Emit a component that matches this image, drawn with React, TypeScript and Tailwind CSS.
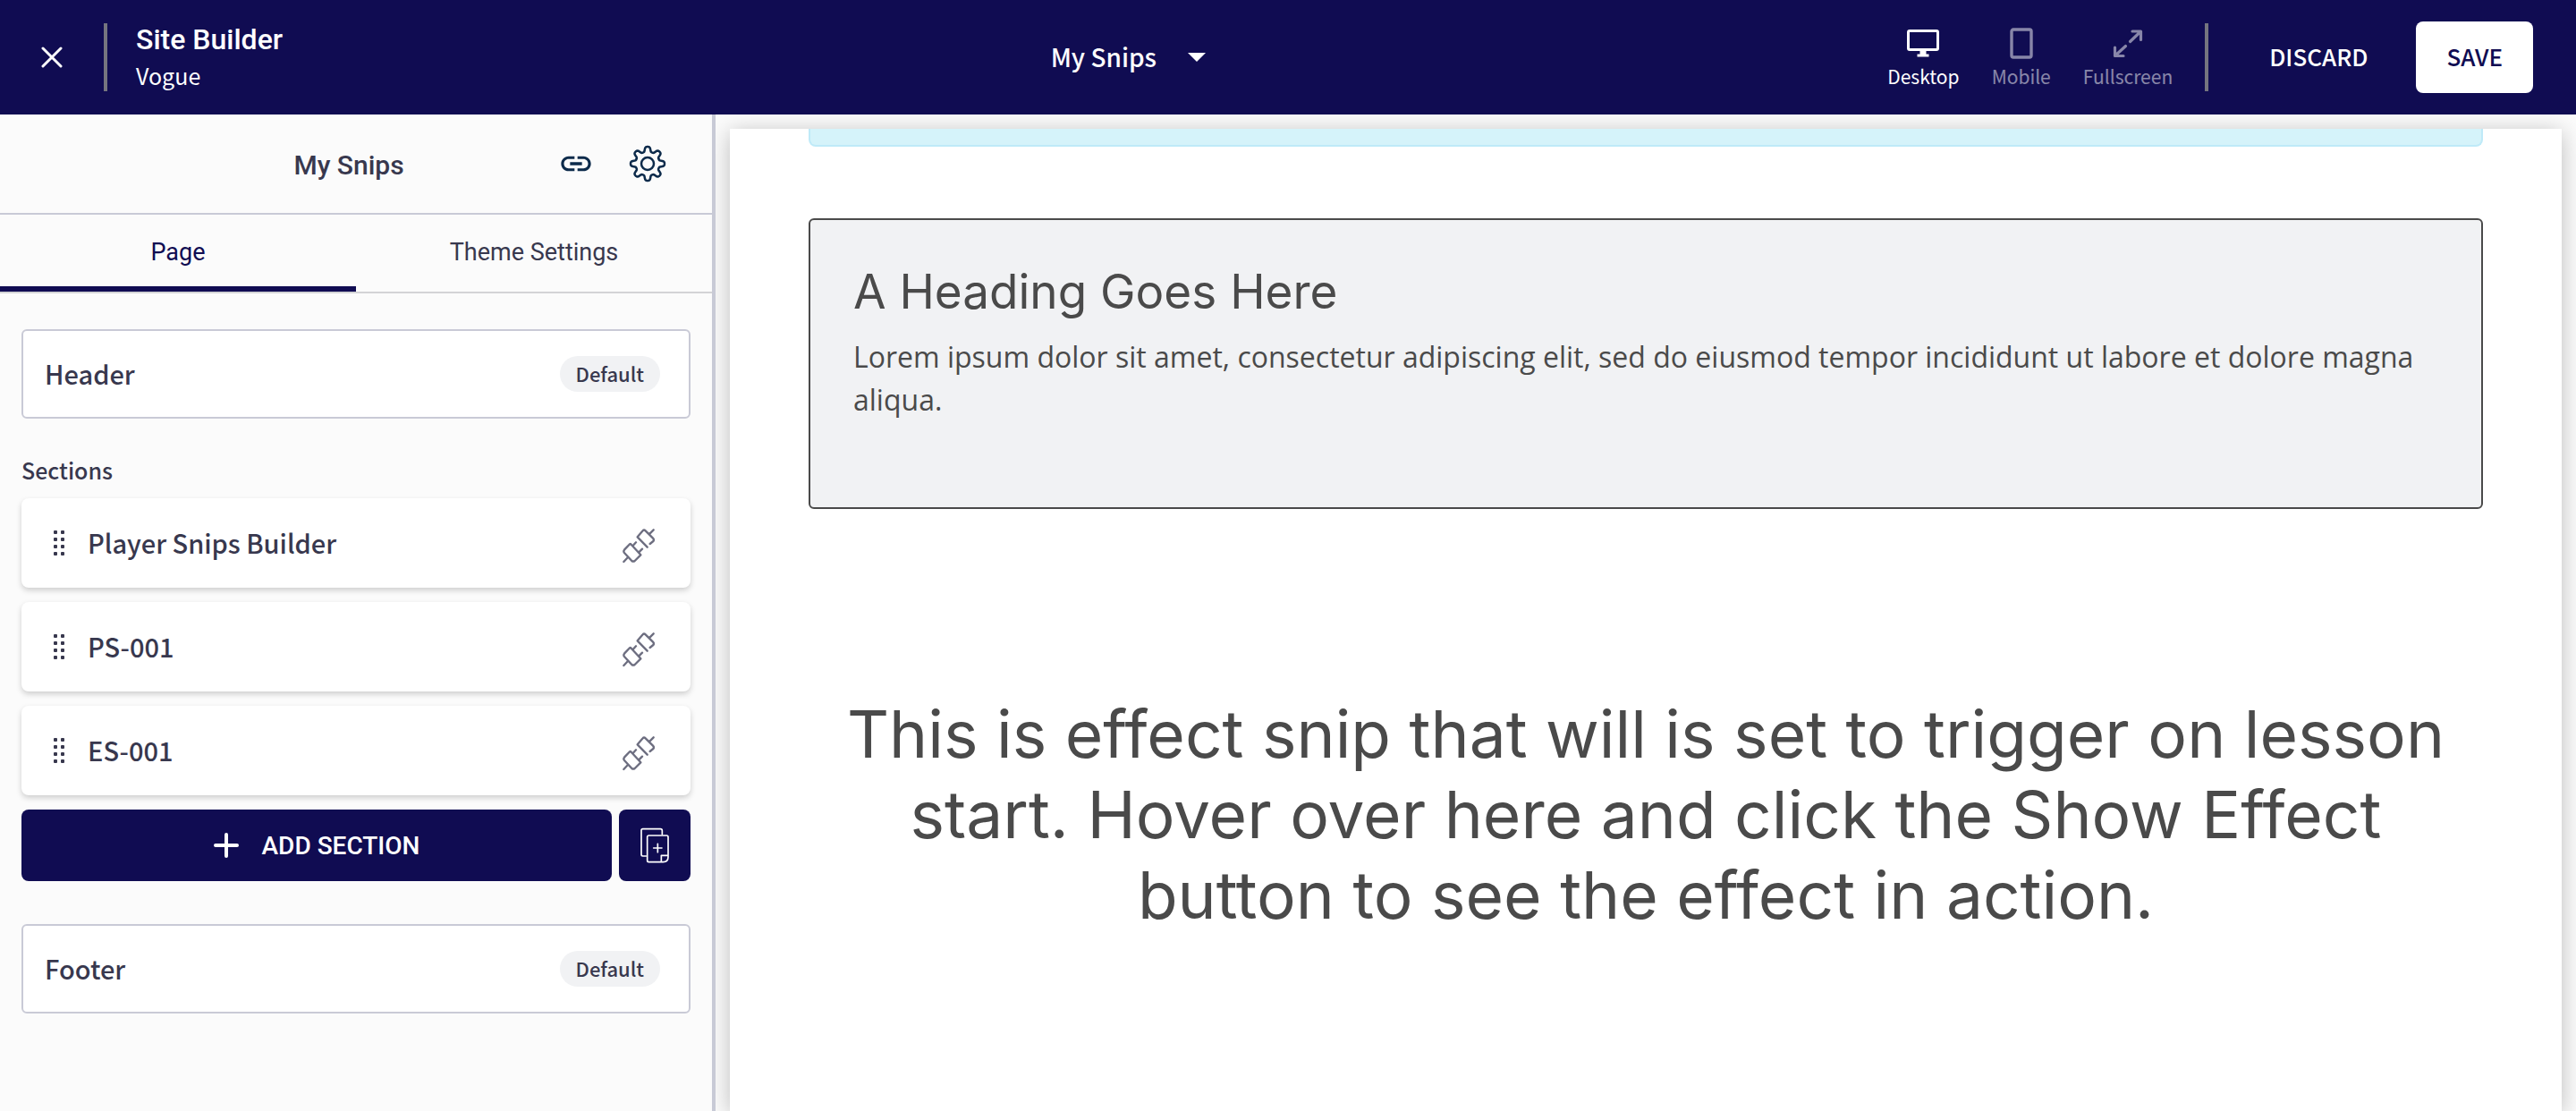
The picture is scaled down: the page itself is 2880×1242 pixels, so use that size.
import type { ReactNode } from 'react';
import { MdLink } from 'react-icons/md';

function CloseIcon() {
  return (
    <svg className="size-6" viewBox="0 0 24 24" fill="none" stroke="currentColor" strokeWidth="3" strokeLinecap="round" aria-hidden="true">
      <path d="M2 2 22 22M22 2 2 22" />
    </svg>
  );
}

function DesktopIcon() {
  return (
    <svg className="size-9" viewBox="0 0 36 36" fill="none" stroke="currentColor" aria-hidden="true">
      <rect x="1.5" y="3.5" width="33" height="21" rx="1.5" strokeWidth="3" />
      <path d="M18 25v6" strokeWidth="7" />
      <path d="M11.5 31h13" strokeWidth="3" />
    </svg>
  );
}

function MobileIcon() {
  return (
    <svg className="size-9" viewBox="0 0 36 36" fill="none" stroke="currentColor" strokeWidth="3.4" aria-hidden="true">
      <rect x="7" y="2" width="22" height="31" rx="2" />
    </svg>
  );
}

function FullscreenIcon() {
  return (
    <svg className="size-9" viewBox="0 0 36 36" fill="none" stroke="currentColor" strokeWidth="3.2" strokeLinecap="round" strokeLinejoin="round" aria-hidden="true">
      <path d="M23 4h9.500v9.500M32 4.500 20.500 15.500" />
      <path d="M13 31.500H3.500V22M4 31 15.500 20.500" />
    </svg>
  );
}

function gearOutline() {
  const points: string[] = [];
  for (let i = 0; i < 240; i++) {
    const a = (i / 240) * Math.PI * 2;
    const r = 16.2 + 2.9 * Math.tanh(1.8 * Math.cos(8 * a));
    points.push(`${(21 + r * Math.cos(a)).toFixed(2)} ${(21 + r * Math.sin(a)).toFixed(2)}`);
  }
  return `M${points.join('L')}Z`;
}

function GearIcon() {
  return (
    <svg className="size-[42px]" viewBox="0 0 42 42" fill="none" stroke="currentColor" strokeWidth="2.5" strokeLinejoin="round" aria-hidden="true">
      <path d={gearOutline()} />
      <circle cx="21" cy="21" r="7" />
    </svg>
  );
}

function DragIcon() {
  return (
    <svg className="h-7 w-3 shrink-0" viewBox="0 0 12 28" fill="currentColor" aria-hidden="true">
      {[0, 8, 16, 24].map((y) => (
        <g key={y}>
          <rect x="0" y={y} width="4" height="4" rx="1" />
          <rect x="8" y={y} width="4" height="4" rx="1" />
        </g>
      ))}
    </svg>
  );
}

function PlugIcon() {
  return (
    <svg className="h-10 w-9" viewBox="108 90 108 120" fill="none" stroke="currentColor" strokeWidth="7" strokeLinecap="round" strokeLinejoin="round" aria-hidden="true">
      <path d="M135 144 169 181 149 201q-5 4-10 0L114 174q-4-5 0-10L130 147q2-3 5-3Z" />
      <path d="M112 204 126 189M143 150 153 139M163 172 174 161" />
      <path d="M191 155 158 121 176 100q4-5 9 0L210 125q5 5 1 10L200 144M197 112 212 97" />
    </svg>
  );
}

function CopyPlusIcon() {
  return (
    <svg className="h-10 w-8" viewBox="168 133 96 120" fill="none" stroke="currentColor" strokeWidth="5" strokeLinecap="round" strokeLinejoin="round" aria-hidden="true">
      <path d="M187 229H176q-5 0-5-5V143q0-5 5-5H235q6 0 6 6V156" />
      <path d="M238 249H196q-5 0-5-5V165q0-5 5-5H256q5 0 5 5V232q0 17-17 17H238V227H260" />
      <path d="M226 188V216M212 202H240" />
    </svg>
  );
}

function ViewButton({ label, icon, active = false }: { label: string; icon: ReactNode; active?: boolean }) {
  return (
    <button type="button" aria-pressed={active} className={`flex flex-col items-center gap-0.5 pt-1 text-[21px] leading-8 ${active ? '' : 'opacity-50'}`}>
      {icon}
      {label}
    </button>
  );
}

function FixedCard({ title }: { title: string }) {
  return (
    <div className="flex h-[100px] items-center justify-between rounded-md border-2 border-[#c9cad6] bg-white pr-8 pl-6">
      <span className="pb-0.5 text-[29px] leading-10 font-medium">{title}</span>
      <span className="flex h-10 items-center rounded-full bg-[#f1f2f4] px-[18px] pb-0.5 text-[22px] leading-8 font-medium">Default</span>
    </div>
  );
}

const sections = ['Player Snips Builder', 'PS-001', 'ES-001'];

export default function App() {
  return (
    <div className="flex h-screen flex-col bg-[#fbfbfb] font-['Noto_Sans_CJK_SC',sans-serif] text-[#38384e]">
      <header className="flex h-32 shrink-0 items-center bg-[#100c52] pr-12 text-white">
        <div className="flex w-[412px] shrink-0 items-center">
          <button type="button" aria-label="Close" className="ml-[46px]">
            <CloseIcon />
          </button>
          <div className="ml-[46px] h-[76px] w-1 bg-[#75757f]" />
          <div className="ml-8">
            <h1 className="font-[Roboto] text-[32px] leading-10 font-medium">Site Builder</h1>
            <p className="text-[25px] leading-10">Vogue</p>
          </div>
        </div>
        <div className="flex flex-1 justify-center">
          <div className="relative flex items-center">
            <select aria-label="Page" className="appearance-none bg-transparent pr-[54px] pb-0.5 text-[28px] leading-10 font-medium">
              <option>My Snips</option>
            </select>
            <svg className="pointer-events-none absolute right-0 h-[10px] w-5" viewBox="0 0 20 10" fill="currentColor" aria-hidden="true">
              <path d="M0 0h20L10 10z" />
            </svg>
          </div>
        </div>
        <div className="flex items-center gap-9">
          <ViewButton label="Desktop" icon={<DesktopIcon />} active />
          <ViewButton label="Mobile" icon={<MobileIcon />} />
          <ViewButton label="Fullscreen" icon={<FullscreenIcon />} />
          <div className="h-[76px] w-1 bg-[#75757f]" />
        </div>
        <button type="button" className="ml-[68px] pb-0.5 text-[26px] leading-10 font-medium">DISCARD</button>
        <button type="button" className="ml-[54px] flex h-20 items-center rounded-lg bg-white px-[34px] pb-0.5 text-[26px] leading-10 font-medium text-[#100c52]">
          SAVE
        </button>
      </header>

      <div className="flex min-h-0 flex-1">
        <aside className="w-[800px] shrink-0 border-r-4 border-[#c8cad6]">
          <div className="flex h-28 items-center border-b-2 border-[#c8cad6] pr-[51px] pl-[156px]">
            <h2 className="flex-1 pt-1 text-center font-[Roboto] text-[30px] leading-10 font-medium">My Snips</h2>
            <button type="button" aria-label="Copy link" className="text-[#0d2b4b]">
              <MdLink className="size-10" />
            </button>
            <button type="button" aria-label="Page settings" className="ml-[39px] text-[#0d2b4b]">
              <GearIcon />
            </button>
          </div>
          <div role="tablist" className="grid grid-cols-2 border-b-2 border-[#d3d3d6] font-[Roboto] text-[27px] leading-10">
            <button type="button" role="tab" aria-selected="true" className="h-[86px] border-b-6 border-[#100c52] pt-1 text-[#100c52]">Page</button>
            <button type="button" role="tab" aria-selected="false" className="h-[86px] border-b-6 border-transparent pt-1">Theme Settings</button>
          </div>
          <div className="px-6 pt-10">
            <FixedCard title="Header" />
            <h3 className="mt-[41px] mb-4 text-[25px] leading-8 font-medium">Sections</h3>
            <ul className="flex flex-col gap-4">
              {sections.map((name) => (
                <li key={name} className="flex h-[100px] items-center rounded-lg bg-white pr-10 pl-9 shadow-[0_3px_6px_rgba(0,0,0,0.18)]">
                  <DragIcon />
                  <span className="flex-1 pb-0.5 pl-[26px] text-[29px] leading-10 font-medium">{name}</span>
                  <button type="button" aria-label={`Connect ${name}`} className="pt-1.5 text-[#6d6e80]">
                    <PlugIcon />
                  </button>
                </li>
              ))}
            </ul>
            <div className="mt-4 flex gap-2 text-white">
              <button type="button" className="flex h-20 flex-1 items-center justify-center gap-[26px] rounded-lg bg-[#100c52] font-[Roboto] text-[28px] leading-10 font-medium">
                <svg className="size-7" viewBox="0 0 28 28" fill="none" stroke="currentColor" strokeWidth="4" strokeLinecap="round" aria-hidden="true">
                  <path d="M14 2v24M2 14h24" />
                </svg>
                <span className="pt-0.5">ADD SECTION</span>
              </button>
              <button type="button" aria-label="Duplicate section" className="flex size-20 items-center justify-center rounded-lg bg-[#100c52]">
                <CopyPlusIcon />
              </button>
            </div>
            <div className="mt-12">
              <FixedCard title="Footer" />
            </div>
          </div>
        </aside>

        <main className="min-w-0 flex-1 overflow-hidden px-4 pt-4 text-[#4a4a4a]">
          <div className="h-full bg-white px-[88px] shadow-[0_4px_24px_rgba(0,0,0,0.25)]">
            <div className="h-5 rounded-b-lg border-2 border-t-0 border-[#bfeaf8] bg-[#d5f3fa]" />
            <section className="mt-20 rounded-md border-2 border-[#4a4a4a] bg-[#f1f2f4] px-12 pt-12 pb-24">
              <h2 className="font-[Inter] text-[53px] leading-16">A Heading Goes Here</h2>
              <p className="mt-[17px] font-['Open_Sans'] text-[32px] leading-12">
                Lorem ipsum dolor sit amet, consectetur adipiscing elit, sed do eiusmod tempor incididunt ut labore et dolore magna aliqua.
              </p>
            </section>
            <h2 className="mt-[207px] px-10 text-center font-[Inter] text-[73px] leading-[90px]">
              This is effect snip that will is set to trigger on lesson start. Hover over here and click the Show Effect button to see the effect in action.
            </h2>
          </div>
        </main>
      </div>
    </div>
  );
}
